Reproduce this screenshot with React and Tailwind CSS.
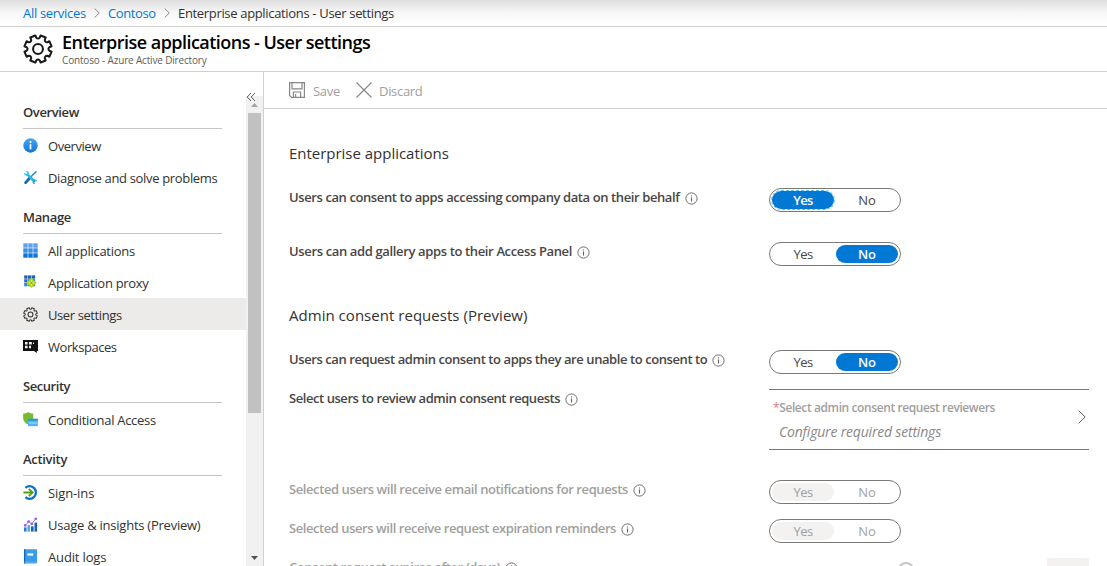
import React from "react";

const TEETH = 8;
const polar = (a, r) => `${(12.5 + r * Math.sin(a)).toFixed(2)} ${(12.5 - r * Math.cos(a)).toFixed(2)}`;
const GEAR_PATH =
  Array.from({ length: TEETH }, (_, i) => {
    const mid = ((i + 0.5) * 2 * Math.PI) / TEETH;
    const next = mid + (2 * Math.PI) / TEETH;
    return `${i ? "L" : "M"}${polar(mid - 0.2, 11.5)} L${polar(mid + 0.2, 11.5)} L${polar(mid + 0.24, 9.6)} Q${polar((mid + next) / 2, 7.9)} ${polar(next - 0.24, 9.6)}`;
  }).join(" ") + " Z";

function Gear({ className, strokeWidth, color }) {
  return (
    <svg className={className} viewBox="0 0 25 25" fill="none" stroke={color} strokeWidth={strokeWidth} strokeLinejoin="round">
      <path d={GEAR_PATH} />
      <circle cx="12.5" cy="12.5" r="4.1" />
    </svg>
  );
}

function Chevron({ className, color }) {
  return (
    <svg className={className} viewBox="0 0 8 14" fill="none" stroke={color}>
      <path d="M0.7 0.7 L7.2 7 L0.7 13.3" />
    </svg>
  );
}

function Info({ color = "#605e5c" }) {
  return (
    <svg className="mt-1 size-[13px] shrink-0" viewBox="0 0 13 13" fill="none" stroke={color}>
      <circle cx="6.5" cy="6.5" r="5.6" strokeWidth="0.9" />
      <path d="M6.5 5.5 V9.6 M6.5 3.4 V4.6" strokeWidth="1.1" />
    </svg>
  );
}

const icons = {
  info: (
    <>
      <defs>
        <linearGradient id="blue" x1="0" y1="0" x2="0" y2="1">
          <stop offset="0" stopColor="#4aa5ec" />
          <stop offset="1" stopColor="#0f78d4" />
        </linearGradient>
      </defs>
      <circle cx="7.5" cy="7.5" r="7.2" fill="url(#blue)" />
      <path d="M7.5 6.2 V11.4" stroke="#fff" strokeWidth="1.7" />
      <circle cx="7.5" cy="4.1" r="1.05" fill="#fff" />
    </>
  ),
  tools: (
    <>
      <path d="M13.4 1.2 L7.5 7.2" stroke="#1a88c9" strokeWidth="1.4" />
      <path d="M6.8 8 L2.6 12.6" stroke="#1268ad" strokeWidth="2.8" strokeLinecap="round" />
      <path d="M4.2 4.2 L12 12" stroke="#2bb5e3" strokeWidth="2.6" />
      <path d="M1.2 2.6 L3.1 4.3 L4.4 3 L2.7 1.1 C4.6 0.4 6.3 1.9 5.8 4 L4 5.8 C2.2 6.2 0.6 4.6 1.2 2.6 Z" fill="#32c4ea" />
      <path d="M14 11.8 L12.4 10.6 L10.8 12.2 L12.2 14 C10.6 14.3 9.3 13 9.6 11.4 L11.3 9.6 C13 9.2 14.3 10.3 14 11.8 Z" fill="#229bd6" />
    </>
  ),
  grid: (
    <>
      {[0, 1, 2].map((r) =>
        [0, 1, 2].map((c) => (
          <rect key={`${r}${c}`} x={0.3 + c * 5} y={0.3 + r * 5} width="4.4" height="4.4" fill={["#5ea0ef", "#3a8ee6", "#0f74d8"][r]} />
        ))
      )}
    </>
  ),
  proxy: (
    <>
      {[0, 1, 2].map((r) =>
        [0, 1, 2].map((c) => (
          <rect key={`${r}${c}`} x={1.2 + c * 3.8} y={0.4 + r * 3.8} width="3.3" height="3.3" fill={["#1a5fb0", "#1a72cc", "#2b86dc"][r]} />
        ))
      )}
      <path d="M8.4 2.8 L13.6 7.8 L8.4 13 L3.2 7.8 Z" fill="#b4d40e" />
      <path d="M8.4 5 V10.6 M5.7 7.8 H11.1" stroke="#f4fad8" strokeWidth="0.9" />
      <circle cx="8.4" cy="7.8" r="1.1" fill="#8aac10" />
    </>
  ),
  workspaces: (
    <>
      <path d="M0 1 H15 V12 H13.8 V14 L11 12 H0 Z" fill="#111" />
      <path d="M2 3 H4.6 V5.4 H2 Z M6 3 H8.8 V5.4 H6 Z M2 6.8 H4.6 V9.2 H2 Z M6 6.8 H8 V9.2 H6 Z M10 3.6 H11 V5 H10 Z" fill="#f2f2f2" />
    </>
  ),
  shield: (
    <>
      <path d="M5.2 0 C6.6 1.2 8.4 1.5 10.2 1.5 V6.4 C10.2 9.4 7.4 11.4 5.2 12.6 C3 11.4 0.2 9.4 0.2 6.4 V1.5 C2 1.5 3.8 1.2 5.2 0 Z" fill="#76bc2d" />
      <rect x="5" y="6.8" width="9.8" height="7.4" fill="#50b4f2" />
      <rect x="5" y="6.8" width="9.8" height="1.9" fill="#2e8fd8" />
      <path d="M6 11 H13.8" stroke="#c8ebff" strokeWidth="0.8" />
    </>
  ),
  signin: (
    <>
      <path d="M2.4 2.8 A6.3 6.3 0 1 1 2.4 12.2" fill="none" stroke="#0a72cc" strokeWidth="2.3" />
      <path d="M0.4 7.5 H9.4 M5.8 3.9 L9.6 7.5 L5.8 11.1" fill="none" stroke="#5ba00c" strokeWidth="1.9" />
    </>
  ),
  insights: (
    <>
      <rect x="1" y="10.4" width="2.6" height="4.2" fill="#2a7cc4" />
      <rect x="4.5" y="8.2" width="2.6" height="6.4" fill="#4ba8e0" />
      <rect x="8" y="9.4" width="2.6" height="5.2" fill="#1a62aa" />
      <rect x="11.5" y="5.6" width="2.6" height="9" fill="#1a62aa" />
      <path d="M2.2 8.4 L5.6 4.6 L8.6 6.8 L12.8 1.8" fill="none" stroke="#a678e8" strokeWidth="1" />
      <circle cx="2.2" cy="8.4" r="1.4" fill="#9b62e6" />
      <circle cx="5.6" cy="4.6" r="1.4" fill="#9b62e6" />
      <circle cx="8.8" cy="6.9" r="1.4" fill="#9b62e6" />
      <circle cx="12.8" cy="1.8" r="1.4" fill="#9b62e6" />
    </>
  ),
  logs: (
    <>
      <rect x="1" y="0.2" width="13" height="14.4" rx="1" fill="#3a9ce8" />
      <rect x="1" y="0.2" width="1.3" height="14.4" fill="#1466b4" />
      <rect x="4.4" y="4.4" width="5.8" height="2.2" fill="#fff" />
      <rect x="1.4" y="12.8" width="11.6" height="0.8" fill="#6cb8f0" />
    </>
  ),
};

function NavHeading({ children, tracking }) {
  return (
    <div className="ml-[23px] flex h-[41px] w-[199px] shrink-0 items-end border-b border-[#c8c6c4]">
      <span className={`mb-[7px] text-[13px] leading-[18px] font-[550] text-[#323130] ${tracking}`}>{children}</span>
    </div>
  );
}

function NavItem({ icon, children, tracking, active }) {
  return (
    <div className={`flex h-8 shrink-0 items-center gap-[10px] pl-[23px] ${active ? "bg-[#edebe9]" : ""}`}>
      {icon === "gear" ? (
        <Gear className="size-[15px]" strokeWidth="1.7" color="#323130" />
      ) : (
        <svg className="size-[15px]" viewBox="0 0 15 15">{icons[icon]}</svg>
      )}
      <span className={`mt-px text-[13px] leading-[18px] text-[#323130] ${tracking}`}>{children}</span>
    </div>
  );
}

function Toggle({ value, disabled, focused }) {
  const on = disabled
    ? "bg-[#f3f2f1] text-[#a19f9d]"
    : focused
      ? "bg-[#0078d4] text-white font-[550] outline-1 outline-dashed outline-[#4cc3ff]"
      : "bg-[#0078d4] text-white font-[550]";
  const off = disabled ? "text-[#a19f9d]" : "text-[#484644]";
  const pill = "flex h-[18px] w-[62px] items-center justify-center rounded-full text-[13px] leading-[18px]";
  return (
    <div className="flex h-6 w-[132px] shrink-0 items-center justify-between rounded-full border border-[#7a7876] px-[2px]">
      <span className={`${pill} tracking-[-0.6px] ${value === "Yes" ? on : off}`}>Yes</span>
      <span className={`${pill} ${value === "No" ? on : off}`}>No</span>
    </div>
  );
}

function Setting({ label, tracking, disabled, children, className }) {
  return (
    <div className={`flex shrink-0 items-start ${className}`}>
      <div className="flex w-[480px] shrink-0 items-start gap-[5px]">
        <span className={`text-[13px] leading-[19px] font-[550] whitespace-nowrap ${tracking} ${disabled ? "text-[#a19f9d]" : "text-[#484644]"}`}>
          {label}
        </span>
        <Info />
      </div>
      {children}
    </div>
  );
}

export default function App() {
  return (
    <div className="flex h-[566px] w-[1107px] flex-col overflow-hidden bg-white font-['Open_Sans','Noto_Sans',sans-serif] whitespace-nowrap text-[#323130]">
      <nav className="flex h-[27px] shrink-0 items-center border-b border-[#d2d0ce] bg-linear-to-b from-[#dedede] via-[#f8f8f8] via-50% to-white pl-[23px] text-[13px] leading-[18px]">
        <span className="w-[71px] tracking-[-0.3px] text-[#0078d4]">All services</span>
        <Chevron className="h-[10px] w-[6px]" color="#605e5c" />
        <span className="ml-[8px] w-[56px] tracking-[-0.4px] text-[#0078d4]">Contoso</span>
        <Chevron className="h-[10px] w-[6px]" color="#605e5c" />
        <span className="ml-[8px] tracking-[-0.33px]">Enterprise applications - User settings</span>
      </nav>

      <header className="flex h-[45px] shrink-0 items-center border-b border-[#d2d0ce] pl-[23px]">
        <Gear className="size-[30px]" strokeWidth="1.7" color="#1b1a19" />
        <div className="ml-[9px] flex flex-col">
          <h1 className="text-[18px] leading-[21px] font-[550] tracking-[-0.53px] text-black">Enterprise applications - User settings</h1>
          <p className="mt-px text-[10px] leading-[13px] tracking-[-0.17px] text-[#605e5c]">Contoso - Azure Active Directory</p>
        </div>
      </header>

      <div className="flex min-h-0 flex-1">
        <aside className="flex w-[264px] shrink-0 border-r border-[#d2d0ce]">
          <div className="flex w-[246px] shrink-0 flex-col overflow-hidden pt-4">
            <NavHeading tracking="tracking-[-0.38px]">Overview</NavHeading>
            <NavItem icon="info" tracking="tracking-[-0.45px]">Overview</NavItem>
            <NavItem icon="tools" tracking="tracking-[-0.34px]">Diagnose and solve problems</NavItem>
            <NavHeading tracking="tracking-[-0.35px]">Manage</NavHeading>
            <NavItem icon="grid" tracking="tracking-[-0.27px]">All applications</NavItem>
            <NavItem icon="proxy" tracking="tracking-[-0.3px]">Application proxy</NavItem>
            <NavItem icon="gear" tracking="tracking-[-0.4px]" active>User settings</NavItem>
            <NavItem icon="workspaces" tracking="tracking-[-0.45px]">Workspaces</NavItem>
            <NavHeading tracking="tracking-[-0.45px]">Security</NavHeading>
            <NavItem icon="shield" tracking="tracking-[-0.3px]">Conditional Access</NavItem>
            <NavHeading tracking="tracking-[-0.3px]">Activity</NavHeading>
            <NavItem icon="signin" tracking="tracking-[-0.1px]">Sign-ins</NavItem>
            <NavItem icon="insights" tracking="tracking-[-0.24px]">Usage &amp; insights (Preview)</NavItem>
            <NavItem icon="logs" tracking="tracking-[-0.15px]">Audit logs</NavItem>
          </div>
          <div className="relative mt-6 flex w-[17px] flex-col items-center bg-[#f1f1f1]">
            <svg className="absolute top-[-4px] left-0 h-[10px] w-[10px]" viewBox="0 0 10 10" fill="none" stroke="#605e5c">
              <path d="M5 1 L1.2 5 L5 9 M9 1 L5.2 5 L9 9" />
            </svg>
            <svg className="mt-[7px] h-1 w-[7px] shrink-0" viewBox="0 0 7 4"><path d="M0 4 L3.5 0 L7 4 Z" fill="#a3a3a3" /></svg>
            <div className="mt-[6px] h-[300px] w-[13px] shrink-0 bg-[#c1c1c1]" />
            <svg className="mt-auto mb-[6px] h-1 w-[7px] shrink-0" viewBox="0 0 7 4"><path d="M0 0 L3.5 4 L7 0 Z" fill="#505050" /></svg>
          </div>
        </aside>

        <main className="flex min-w-0 flex-1 flex-col">
          <div className="flex h-[37px] shrink-0 items-center border-b border-[#d2d0ce] pl-[25px] text-[13px] leading-[18px] text-[#a19f9d]">
            <svg className="size-4" viewBox="0 0 16 16" fill="none" stroke="#8a8886" strokeWidth="1.2">
              <path d="M0.6 0.6 H15.4 V15.4 H2.6 L0.6 13.4 Z M3 0.6 V6.8 H13 V0.6 M4.4 15.4 V10 H11.6 V15.4 M6.6 12 V15" />
            </svg>
            <span className="mt-[2px] ml-[8px] w-[43px] tracking-[-0.3px]">Save</span>
            <svg className="size-4" viewBox="0 0 16 16" stroke="#8a8886" strokeWidth="1.2"><path d="M0.5 0.5 L15.5 15.5 M15.5 0.5 L0.5 15.5" /></svg>
            <span className="mt-[2px] ml-[7px] tracking-[-0.3px]">Discard</span>
          </div>

          <section className="flex min-h-0 flex-1 flex-col overflow-hidden pt-8 pl-[25px]">
            <h2 className="h-6 shrink-0 text-[15px] leading-6 tracking-[-0.02px]">Enterprise applications</h2>
            <Setting className="mt-[23px] h-6" label="Users can consent to apps accessing company data on their behalf" tracking="tracking-[-0.4px]">
              <Toggle value="Yes" focused />
            </Setting>
            <Setting className="mt-[30px] h-6" label="Users can add gallery apps to their Access Panel" tracking="tracking-[-0.36px]">
              <Toggle value="No" />
            </Setting>
            <h2 className="mt-[37px] h-6 shrink-0 text-[15px] leading-6 tracking-[0.03px]">Admin consent requests (Preview)</h2>
            <Setting className="mt-[23px] h-6" label="Users can request admin consent to apps they are unable to consent to" tracking="tracking-[-0.42px]">
              <Toggle value="No" />
            </Setting>
            <Setting className="mt-[15px] h-[61px]" label="Select users to review admin consent requests" tracking="tracking-[-0.44px]">
              <div className="flex h-[61px] w-[320px] items-center justify-between border-y border-[#7a7876] pr-[3px] pl-1">
                <div className="flex flex-col">
                  <span className="mt-px text-[12px] leading-[17px] font-[550] tracking-[-0.4px] text-[#a19f9d]">
                    <span className="text-[#d98c90]">*</span>Select admin consent request reviewers
                  </span>
                  <span className="mt-[6px] ml-[6px] text-[14px] leading-[20px] tracking-[-0.19px] text-[#8a8886] italic">Configure required settings</span>
                </div>
                <Chevron className="mt-[-6px] h-[14px] w-2" color="#605e5c" />
              </div>
            </Setting>
            <Setting disabled className="mt-[30px] h-6" label="Selected users will receive email notifications for requests" tracking="tracking-[-0.41px]">
              <Toggle value="Yes" disabled />
            </Setting>
            <Setting disabled className="mt-[15px] h-6" label="Selected users will receive request expiration reminders" tracking="tracking-[-0.44px]">
              <Toggle value="Yes" disabled />
            </Setting>
            <Setting disabled className="mt-[15px] h-6" label="Consent request expires after (days)" tracking="tracking-[-0.44px]">
              <div className="flex w-[320px] items-start justify-between">
                <div className="mt-[4px] ml-[129px] size-4 rounded-full border-2 border-[#c8c6c4]" />
                <div className="h-6 w-[42px] rounded-[2px] bg-[#f3f2f1]" />
              </div>
            </Setting>
          </section>
        </main>
      </div>
    </div>
  );
}
